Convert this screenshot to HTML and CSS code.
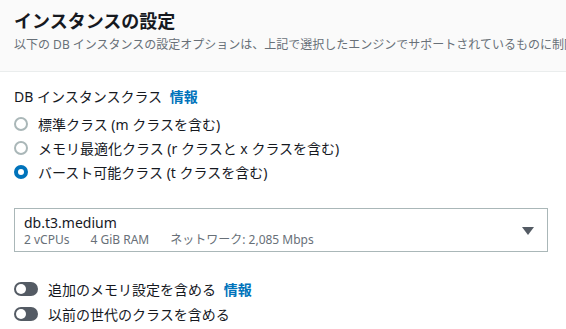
FILE: index.html
```html
<!DOCTYPE html>
<html lang="ja">
<head>
    <meta charset="UTF-8">
    <meta name="viewport" content="width=device-width, initial-scale=1.0">
    <link rel="stylesheet" href="styles.css">
    <title>インスタンスの設定</title>
</head>
<body>
    <div class="panel">
      <div class="panel-header">
        <h2 class="panel-title">インスタンスの設定</h2>
        <p class="panel-desc">以下の DB インスタンスの設定オプションは、上記で選択したエンジンでサポートされているものに制限されます。</p>
      </div>
      <div class="panel-body">
        <div class="field-label">DB インスタンスクラス <a class="info-link" href="#">情報</a></div>
        <div class="radio-group">
          <label class="radio-row"><span class="radio"></span><span>標準クラス (m クラスを含む)</span></label>
          <label class="radio-row"><span class="radio"></span><span>メモリ最適化クラス (r クラスと x クラスを含む)</span></label>
          <label class="radio-row"><span class="radio radio-checked"></span><span>バースト可能クラス (t クラスを含む)</span></label>
        </div>
        <div class="select">
          <div class="select-content">
            <div class="select-value">db.t3.medium</div>
            <div class="select-tags">
              <span>2 vCPUs</span>
              <span>4 GiB RAM</span>
              <span>ネットワーク: 2,085 Mbps</span>
            </div>
          </div>
          <span class="select-caret"></span>
        </div>
        <div class="toggle-group">
          <label class="toggle-row"><span class="toggle"></span><span>追加のメモリ設定を含める <a class="info-link" href="#">情報</a></span></label>
          <label class="toggle-row"><span class="toggle"></span><span>以前の世代のクラスを含める</span></label>
        </div>
      </div>
    </div>
</body>
</html>
```
FILE: styles.css
```css
html,body {
  margin: 0;
  padding: 0;
}
body {
  background-color: #ffffff;
  color: #16191f;
  font-family: "Noto Sans", "Noto Sans CJK JP", sans-serif;
  font-size: 14px;
  overflow: hidden;
}
.panel-header {
  background-color: #fafafa;
  border-bottom: 1px solid #eaeded;
  padding: 10px 14px 18px;
  white-space: nowrap;
  overflow: hidden;
}
.panel-title {
  margin: 0 0 5px;
  font-size: 18px;
  line-height: 22px;
  font-weight: 700;
}
.panel-desc {
  margin: 0;
  font-size: 12px;
  line-height: 16px;
  color: #687078;
}
.panel-body {
  padding: 15px 14px 0;
}
.field-label {
  line-height: 20px;
}
.info-link {
  color: #0073bb;
  font-weight: 700;
  text-decoration: none;
  margin-left: 4px;
}
.radio-group {
  margin-top: 5px;
}
.radio-row,
.toggle-row {
  display: flex;
  align-items: center;
  gap: 10px;
  height: 24px;
  white-space: nowrap;
}
.radio {
  box-sizing: border-box;
  width: 14px;
  height: 14px;
  border: 2px solid #aab7b8;
  border-radius: 50%;
  background: #ffffff;
}
.radio-checked {
  border: 4px solid #0073bb;
}
.select {
  box-sizing: border-box;
  margin-top: 24px;
  width: 534px;
  height: 44px;
  border: 1px solid #aab7b8;
  display: flex;
  align-items: center;
  justify-content: space-between;
  padding: 2px 13px 0 9px;
}
.select-value {
  line-height: 18px;
}
.select-tags {
  display: flex;
  gap: 21px;
  font-size: 12px;
  line-height: 16px;
  color: #687078;
}
.select-caret {
  width: 0;
  height: 0;
  border-left: 6px solid transparent;
  border-right: 6px solid transparent;
  border-top: 8px solid #545b64;
}
.toggle-group {
  margin-top: 24px;
}
.toggle-row {
  height: 25px;
}
.toggle {
  position: relative;
  width: 24px;
  height: 14px;
  border-radius: 7px;
  background: #545b64;
}
.toggle::before {
  position: absolute;
  content: '';
  left: 2px;
  top: 2px;
  width: 10px;
  height: 10px;
  border-radius: 50%;
  background: #ffffff;
}
```
